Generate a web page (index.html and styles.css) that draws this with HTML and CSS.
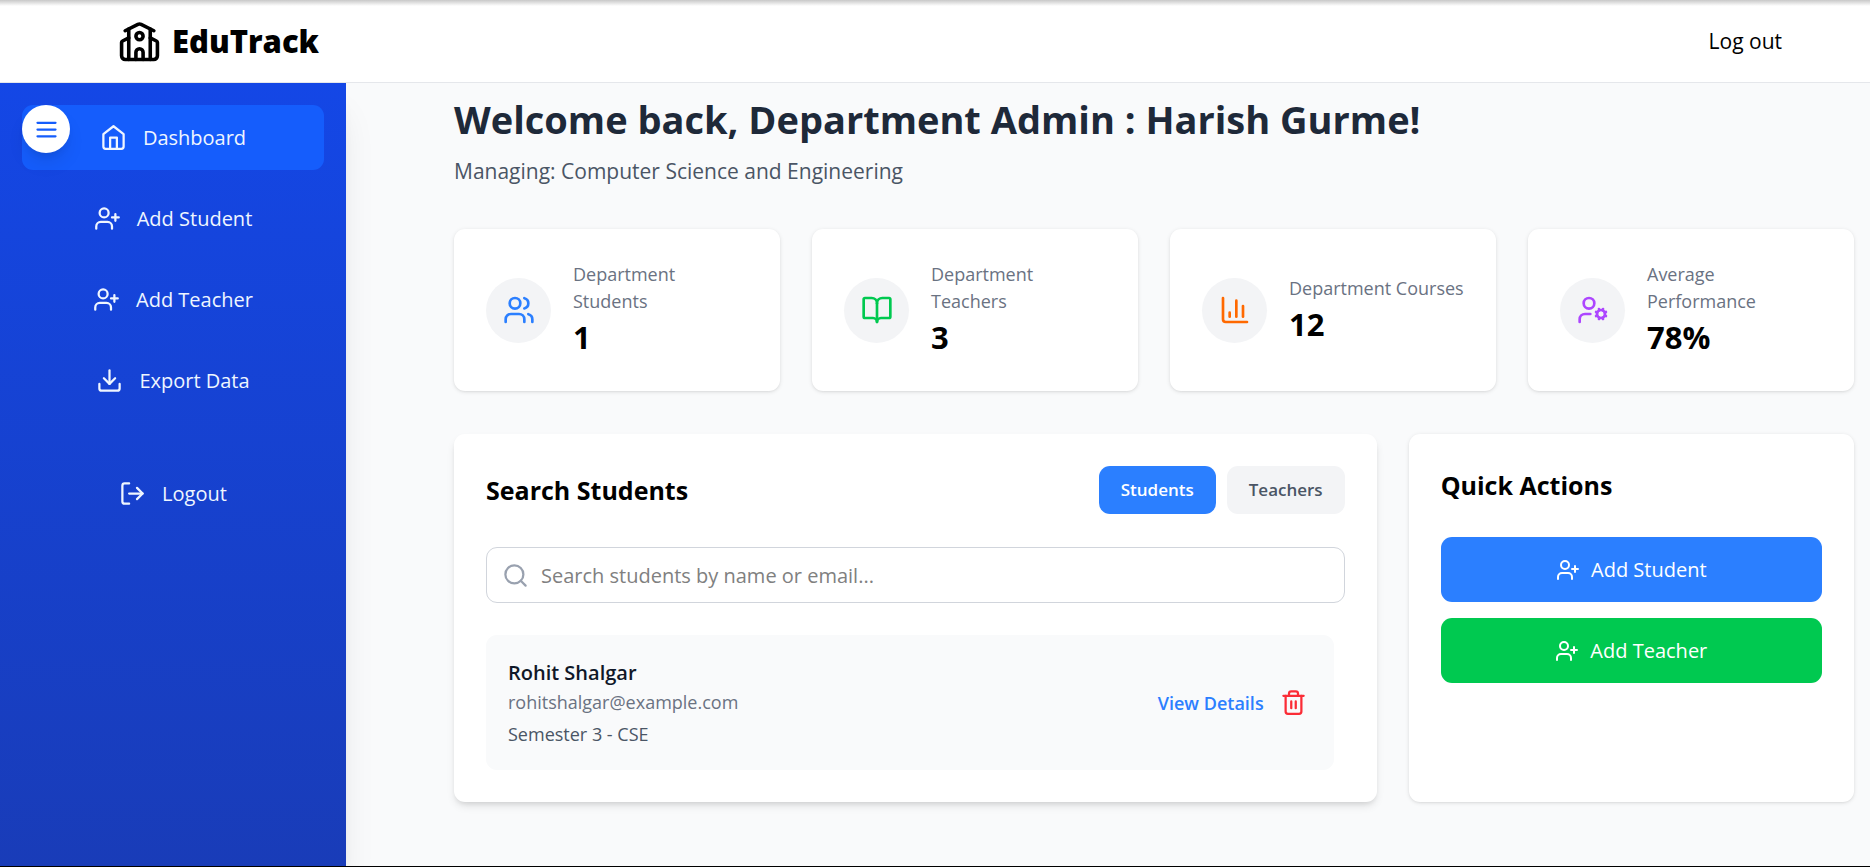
FILE: index.html
```html
<!DOCTYPE html>
<html lang="en">
<head>
<meta charset="utf-8">
<meta name="viewport" content="width=device-width, initial-scale=1">
<title>EduTrack</title>
<link rel="stylesheet" href="styles.css">
</head>
<body>
<svg class="sprite" aria-hidden="true">
  <symbol id="user-plus" viewBox="0 0 24 24"><path d="M16 21v-2a4 4 0 0 0-4-4H6a4 4 0 0 0-4 4v2"/><circle cx="9" cy="7" r="4"/><path d="M19 8v6M22 11h-6"/></symbol>
</svg>
<header class="topbar">
  <a class="brand" href="#">
    <svg class="icon icon-brand" viewBox="0 0 24 24"><path d="M14 22v-4a2 2 0 1 0-4 0v4"/><path d="m18 10 3.447 1.724a1 1 0 0 1 .553.894V20a2 2 0 0 1-2 2H4a2 2 0 0 1-2-2v-7.382a1 1 0 0 1 .553-.894L6 10"/><path d="M18 5v17"/><path d="m4 6 7.106-3.553a2 2 0 0 1 1.788 0L20 6"/><path d="M6 5v17"/><circle cx="12" cy="9" r="2"/></svg>
    <span>EduTrack</span>
  </a>
  <button class="topbar-logout" type="button">Log out</button>
</header>
<div class="layout">
  <aside class="sidebar">
    <button class="toggle" type="button" aria-label="Toggle menu"><svg class="icon" viewBox="0 0 24 24"><path d="M4 6h16M4 12h16M4 18h16"/></svg></button>
    <nav class="nav">
      <a class="nav-item active" href="#"><svg class="icon" viewBox="0 0 24 24"><path d="m3 9 9-7 9 7v11a2 2 0 0 1-2 2H5a2 2 0 0 1-2-2z"/><path d="M9 22V12h6v10"/></svg><span>Dashboard</span></a>
      <a class="nav-item" href="#"><svg class="icon"><use href="#user-plus"/></svg><span>Add Student</span></a>
      <a class="nav-item" href="#"><svg class="icon"><use href="#user-plus"/></svg><span>Add Teacher</span></a>
      <a class="nav-item" href="#"><svg class="icon" viewBox="0 0 24 24"><path d="M12 15V3"/><path d="M21 15v4a2 2 0 0 1-2 2H5a2 2 0 0 1-2-2v-4"/><path d="m7 10 5 5 5-5"/></svg><span>Export Data</span></a>
    </nav>
    <button class="nav-item" type="button"><svg class="icon" viewBox="0 0 24 24"><path d="M9 21H5a2 2 0 0 1-2-2V5a2 2 0 0 1 2-2h4"/><path d="m16 17 5-5-5-5"/><path d="M21 12H9"/></svg><span>Logout</span></button>
  </aside>
  <main class="main">
    <h1 class="title">Welcome back, Department Admin : Harish Gurme!</h1>
    <p class="subtitle">Managing: Computer Science and Engineering</p>
    <section class="stats" aria-label="Statistics">
      <article class="card stat">
        <span class="badge blue"><svg class="icon icon-stat" viewBox="0 0 24 24"><path d="M16 21v-2a4 4 0 0 0-4-4H6a4 4 0 0 0-4 4v2"/><path d="M16 3.128a4 4 0 0 1 0 7.744"/><path d="M22 21v-2a4 4 0 0 0-3-3.87"/><circle cx="9" cy="7" r="4"/></svg></span>
        <div><p class="stat-label">Department Students</p><p class="stat-value">1</p></div>
      </article>
      <article class="card stat">
        <span class="badge green"><svg class="icon icon-stat" viewBox="0 0 24 24"><path d="M12 7v14"/><path d="M3 18a1 1 0 0 1-1-1V4a1 1 0 0 1 1-1h5a4 4 0 0 1 4 4 4 4 0 0 1 4-4h5a1 1 0 0 1 1 1v13a1 1 0 0 1-1 1h-6a3 3 0 0 0-3 3 3 3 0 0 0-3-3z"/></svg></span>
        <div><p class="stat-label">Department Teachers</p><p class="stat-value">3</p></div>
      </article>
      <article class="card stat">
        <span class="badge orange"><svg class="icon icon-stat" viewBox="0 0 24 24"><path d="M3 3v16a2 2 0 0 0 2 2h16"/><path d="M18 17V9"/><path d="M13 17V5"/><path d="M8 17v-3"/></svg></span>
        <div><p class="stat-label">Department Courses</p><p class="stat-value">12</p></div>
      </article>
      <article class="card stat">
        <span class="badge purple"><svg class="icon icon-stat" viewBox="0 0 24 24"><path d="M10 15H6a4 4 0 0 0-4 4v2"/><path d="m14.305 16.53.923-.382M15.228 13.852l-.923-.383M16.852 12.228l-.383-.923M16.852 17.772l-.383.924M19.148 12.228l.383-.923M19.53 18.696l-.382-.924M20.772 13.852l.924-.383M20.772 16.148l.924.383"/><circle cx="18" cy="15" r="3"/><circle cx="9" cy="7" r="4"/></svg></span>
        <div><p class="stat-label">Average Performance</p><p class="stat-value">78%</p></div>
      </article>
    </section>
    <div class="panels">
      <section class="card panel panel-search">
        <div class="panel-head">
          <h2>Search Students</h2>
          <div class="tabs">
            <button class="tab selected" type="button">Students</button>
            <button class="tab" type="button">Teachers</button>
          </div>
        </div>
        <div class="search">
          <svg class="icon" viewBox="0 0 24 24"><circle cx="11" cy="11" r="8"/><path d="m21 21-4.34-4.34"/></svg>
          <input type="text" aria-label="Search students" placeholder="Search students by name or email...">
        </div>
        <div class="results">
          <article class="result">
            <div>
              <h3>Rohit Shalgar</h3>
              <p class="email">rohitshalgar@example.com</p>
              <p class="semester">Semester 3 - CSE</p>
            </div>
            <div class="result-actions">
              <button class="details" type="button">View Details</button>
              <button class="delete" type="button" aria-label="Delete student"><svg class="icon" viewBox="0 0 24 24"><path d="M10 11v6M14 11v6"/><path d="M19 6v14a2 2 0 0 1-2 2H7a2 2 0 0 1-2-2V6"/><path d="M3 6h18"/><path d="M8 6V4a2 2 0 0 1 2-2h4a2 2 0 0 1 2 2v2"/></svg></button>
            </div>
          </article>
        </div>
      </section>
      <section class="card panel">
        <h2>Quick Actions</h2>
        <div class="actions">
          <button class="action action-student" type="button"><svg class="icon icon-small"><use href="#user-plus"/></svg>Add Student</button>
          <button class="action action-teacher" type="button"><svg class="icon icon-small"><use href="#user-plus"/></svg>Add Teacher</button>
        </div>
      </section>
    </div>
  </main>
</div>
</body>
</html>
```

FILE: styles.css
```css
*, *::before, *::after { box-sizing: border-box; }
body, h1, h2, h3, p { margin: 0; }
body {
  min-height: 100vh;
  display: flex;
  flex-direction: column;
  background: #f9fafb;
  border-bottom: 1px solid #000;
  color: #000;
  font: 20px/32px "Open Sans", "Noto Sans", sans-serif;
}
button, input { font: inherit; color: inherit; }
button { border: 0; padding: 0; background: none; cursor: pointer; }
a { color: inherit; text-decoration: none; }
.sprite { display: none; }
.icon {
  width: 27px;
  height: 27px;
  flex: none;
  fill: none;
  stroke: currentColor;
  stroke-width: 2;
  stroke-linecap: round;
  stroke-linejoin: round;
}
.icon-brand { width: 43px; height: 43px; }
.icon-stat { width: 32px; height: 32px; }
.icon-small { width: 24px; height: 24px; }

.topbar {
  display: flex;
  align-items: center;
  justify-content: space-between;
  height: 83px;
  padding: 0 88px 0 118px;
  background: linear-gradient(#c8c8c8, #fff 6px);
  border-bottom: 1px solid #e5e7eb;
}
.brand { display: flex; align-items: center; gap: 11px; font-size: 31px; font-weight: 800; }
.topbar-logout { font-size: 21px; }

.layout { display: flex; flex: 1; }
.sidebar {
  position: relative;
  flex: none;
  width: 346px;
  padding: 22px;
  display: flex;
  flex-direction: column;
  gap: 48px;
  background: linear-gradient(#1447e6, #193cb8);
  box-shadow: 0 27px 34px -7px #0000001a, 0 11px 14px -8px #0000001a;
  color: #eff6ff;
}
.nav { display: flex; flex-direction: column; gap: 16px; }
.nav-item {
  display: flex;
  align-items: center;
  justify-content: center;
  gap: 16px;
  padding: 16px;
  line-height: 33px;
  border-radius: 11px;
}
.nav-item.active { background: #155dfc; }
.toggle {
  position: absolute;
  top: 22px;
  left: 22px;
  width: 48px;
  height: 48px;
  display: grid;
  place-items: center;
  border-radius: 50%;
  background: #fff;
  color: #155dfc;
  box-shadow: 0 12px 20px -4px #0000001a, 0 5px 8px -4px #0000001a;
}

.main { flex: 1; min-width: 0; padding: 12px 16px 62px 108px; }
.title { font-size: 38px; line-height: 49px; color: #1e2939; }
.subtitle { margin-top: 11px; font-size: 21px; color: #4a5565; }
.card {
  background: #fff;
  border-radius: 11px;
  box-shadow: 0 1px 4px #0000001a, 0 1px 3px -1px #0000001a;
}
.stats { display: grid; grid-template-columns: repeat(4, 1fr); gap: 32px; margin-top: 42px; }
.stat { display: flex; align-items: center; gap: 22px; padding: 32px 28px 32px 32px; }
.badge {
  display: grid;
  place-items: center;
  flex: none;
  width: 65px;
  height: 65px;
  border-radius: 50%;
  background: #f3f4f6;
}
.blue { color: #2b7fff; }
.green { color: #00c950; }
.orange { color: #ff6900; }
.purple { color: #ad46ff; }
.stat-label { font-size: 18px; line-height: 27px; color: #6a7282; }
.stat-value { font-size: 31px; line-height: 44px; font-weight: 700; }

.panels { display: grid; grid-template-columns: repeat(3, 1fr); gap: 32px; margin-top: 43px; }
.panel { padding: 32px; }
.panel-search { grid-column: span 2; box-shadow: 0 5px 8px -1px #0000001a, 0 3px 5px -2px #0000001a; }
.panel h2 { font-size: 25px; line-height: 39px; font-weight: 700; }
.panel-head { display: flex; align-items: center; justify-content: space-between; }
.tabs { display: flex; gap: 11px; }
.tab {
  padding: 10px 22px;
  border-radius: 11px;
  background: #f3f4f6;
  color: #4a5565;
  font-size: 17px;
  line-height: 28px;
  font-weight: 600;
}
.tab.selected { background: #2b7fff; color: #fff; }
.search {
  display: flex;
  align-items: center;
  gap: 12px;
  margin-top: 33px;
  padding: 0 15px;
  border: 1px solid #d1d5dc;
  border-radius: 11px;
  color: #99a1af;
}
.search input { flex: 1; min-width: 0; height: 54px; padding: 0; border: 0; outline: 0; background: none; color: #000; }
.search input::placeholder { color: #808080; opacity: 1; }
.results { margin-top: 32px; padding-right: 11px; }
.result {
  display: flex;
  align-items: center;
  justify-content: space-between;
  padding: 22px;
  border-radius: 11px;
  background: #f9fafb;
}
.result h3 { font-size: 20px; line-height: 32px; font-weight: 600; color: #101828; }
.email, .semester { font-size: 18px; line-height: 27px; color: #6a7282; }
.semester { margin-top: 5px; color: #4a5565; }
.result-actions { display: flex; align-items: center; gap: 11px; }
.details { font-size: 18px; font-weight: 600; color: #2b7fff; }
.delete { display: grid; padding: 5px; color: #fb2c36; }
.actions { display: grid; gap: 16px; margin-top: 32px; }
.action {
  display: flex;
  align-items: center;
  justify-content: center;
  gap: 11px;
  padding: 16px;
  border-radius: 11px;
  color: #fff;
  line-height: 33px;
}
.action-student { background: #2b7fff; }
.action-teacher { background: #00c950; }
```
